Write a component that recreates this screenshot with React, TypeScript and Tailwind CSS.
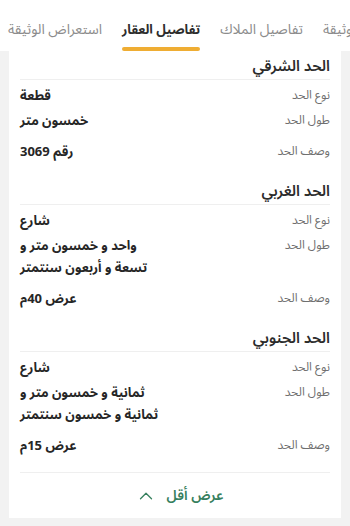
import { ChevronUp } from 'lucide-react';

type Row = { label: string; value: string[] };
type Section = { title: string; rows: Row[] };

// بيانات حدود العقار
const sections: Section[] = [
  {
    title: 'الحد الشرقي',
    rows: [
      { label: 'نوع الحد', value: ['قطعة'] },
      { label: 'طول الحد', value: ['خمسون متر'] },
      { label: 'وصف الحد', value: ['رقم 3069'] },
    ],
  },
  {
    title: 'الحد الغربي',
    rows: [
      { label: 'نوع الحد', value: ['شارع'] },
      { label: 'طول الحد', value: ['واحد و خمسون متر و', 'تسعة و أربعون سنتمتر'] },
      { label: 'وصف الحد', value: ['عرض 40م'] },
    ],
  },
  {
    title: 'الحد الجنوبي',
    rows: [
      { label: 'نوع الحد', value: ['شارع'] },
      { label: 'طول الحد', value: ['ثمانية و خمسون متر و', 'ثمانية و خمسون سنتمتر'] },
      { label: 'وصف الحد', value: ['عرض 15م'] },
    ],
  },
];

const tabs = [
  { label: 'استعراض الوثيقة', active: false },
  { label: 'تفاصيل العقار', active: true },
  { label: 'تفاصيل الملاك', active: false },
  { label: 'بيانات الوثيقة', active: false },
];

const font = { fontFamily: '"Noto Sans Arabic", "Noto Kufi Arabic", "DejaVu Sans", sans-serif' };

export default function App() {
  return (
    <div className="w-[350px] h-[526px] overflow-hidden bg-[#f2f2f2]" style={font}>
      {/* Tabs */}
      <div className="h-[51px] bg-white overflow-hidden">
        <div className="flex flex-row gap-5 pl-[8px] whitespace-nowrap h-full">
          {tabs.map((t) => (
            <div key={t.label} dir="rtl" className="relative flex items-center h-full shrink-0 pt-[9px]">
              <span
                className={`leading-none ${
                  t.active ? 'text-[13px] font-bold text-[#2d2d2d]' : 'text-[14px] text-[#8c8c8c]'
                }`}
              >
                {t.label}
              </span>
              {t.active && (
                <span className="absolute left-0 right-0 bottom-0 h-[4px] rounded-full bg-[#efad33]" />
              )}
            </div>
          ))}
        </div>
      </div>

      {/* Card */}
      <div className="px-[9px]">
        <div dir="rtl" className="bg-white px-[11px] pt-[3px]">
          <div className="flex flex-col gap-[16px]">
            {sections.map((s) => (
              <div key={s.title}>
                <div className="h-[26px] flex items-center border-b border-[#efefef] text-[15px] font-semibold text-[#2b2b2b]">
                  {s.title}
                </div>
                <div className="pt-[5px]">
                  {s.rows.map((r, i) => (
                    <div
                      key={r.label}
                      className={`flex justify-between ${i === 0 ? '' : i === 2 ? 'mt-[9px]' : 'mt-[3px]'}`}
                    >
                      <div className="text-[12px] leading-[22px] text-[#6f6f6f]">{r.label}</div>
                      <div className="text-[13px] leading-[22px] font-bold text-[#262626] text-left">
                        {r.value.map((line) => (
                          <div key={line}>{line}</div>
                        ))}
                      </div>
                    </div>
                  ))}
                </div>
              </div>
            ))}
          </div>

          <div className="mt-[15px] border-t border-[#efefef] h-[46px] flex items-center justify-center gap-[9px] pl-[9px] text-[#36805e]">
            <span className="text-[14px] font-semibold">عرض أقل</span>
            <ChevronUp size={22} strokeWidth={1.4} />
          </div>
        </div>
      </div>
    </div>
  );
}
